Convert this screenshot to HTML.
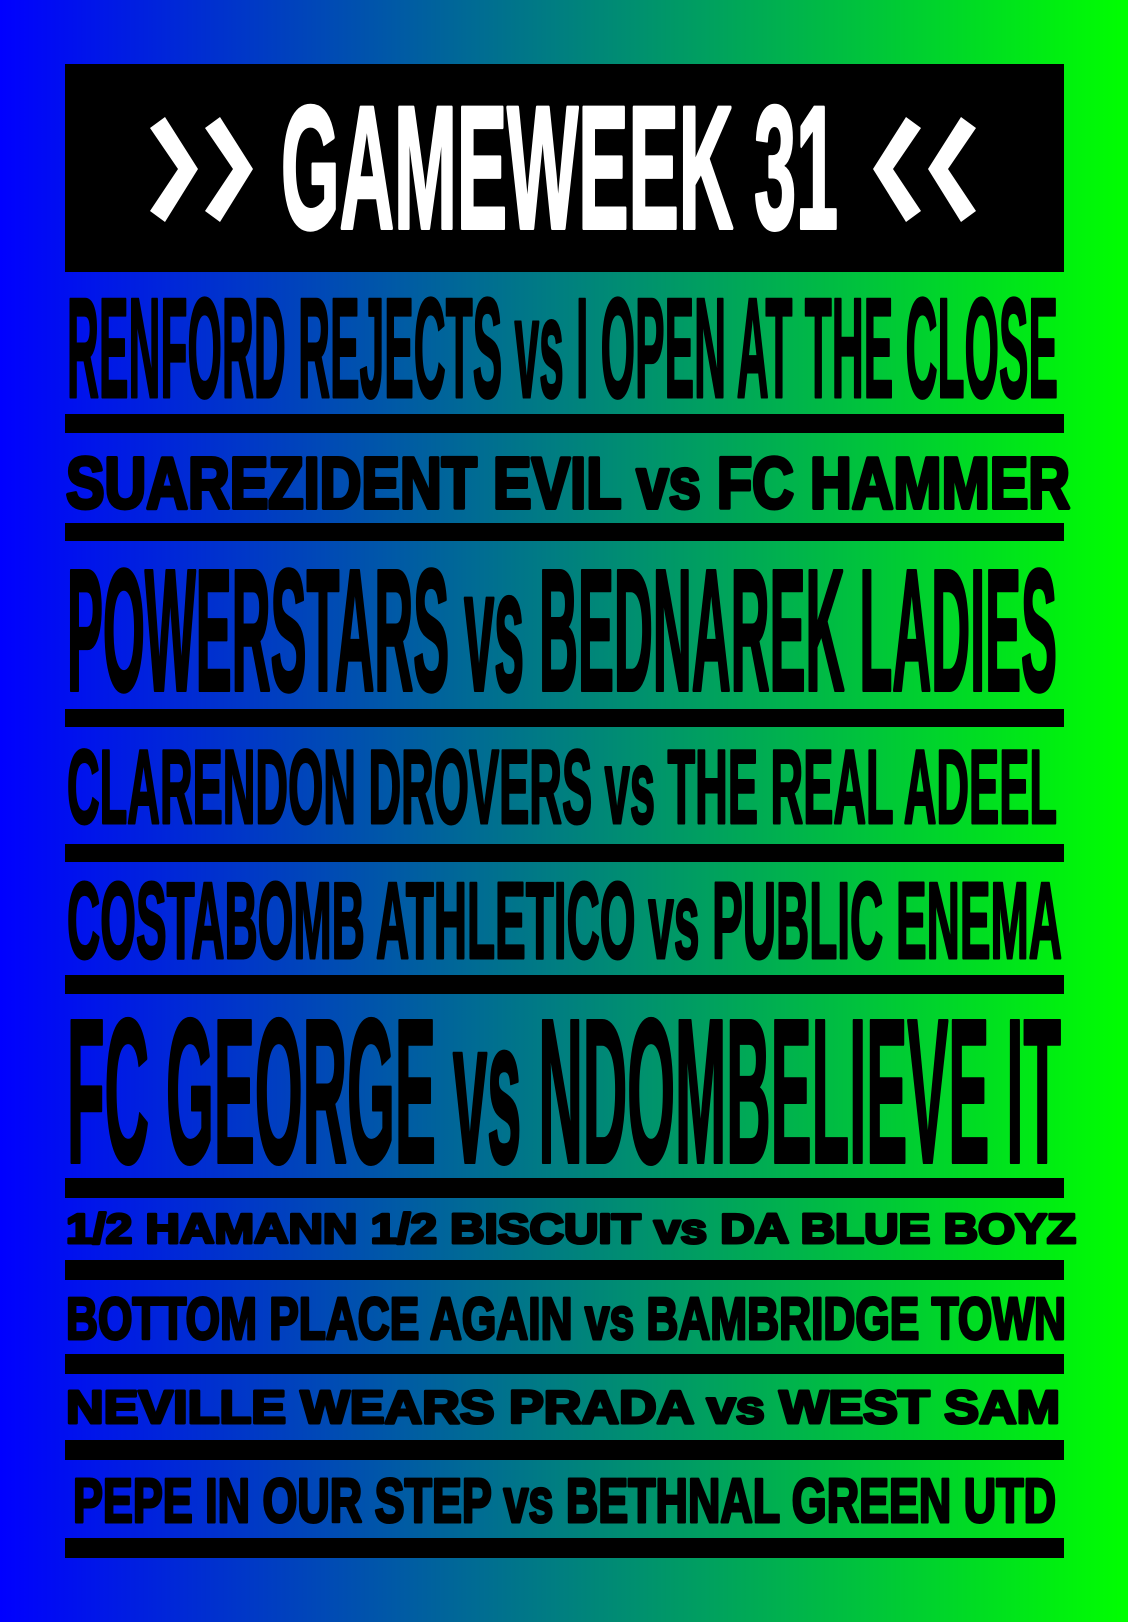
<!DOCTYPE html>
<html><head><meta charset="utf-8"><style>
html,body{margin:0;padding:0;width:1128px;height:1622px;overflow:hidden}
body{background:linear-gradient(to right,#0000ff,#00ff00)}
svg{display:block}
text{font-family:"Liberation Sans Narrow","Liberation Sans",sans-serif;font-weight:bold;stroke-linejoin:round}
.w{font-family:"Liberation Sans",sans-serif}
</style></head><body>
<svg width="1128" height="1622" viewBox="0 0 1128 1622" xmlns="http://www.w3.org/2000/svg">
<rect x="65" y="64" width="999" height="208" fill="#000"/>
<g fill="#fff">
<polygon points="150,128 165,117 198,169 165,222 150,211 178,169"/>
<polygon points="205,128 220,117 253,169 220,222 205,211 233,169"/>
<polygon points="976,128 961,117 928,169 961,222 976,211 948,169"/>
<polygon points="921,128 906,117 873,169 906,222 921,211 893,169"/>
</g>
<text x="281" y="228" font-size="175" fill="#fff" stroke="#fff" stroke-width="4" textLength="557" lengthAdjust="spacingAndGlyphs">GAMEWEEK 31</text>
<g fill="#000" stroke="#000">
<text x="67" y="397" font-size="142" stroke-width="3" textLength="991" lengthAdjust="spacingAndGlyphs">RENFORD REJECTS vs I OPEN AT THE CLOSE</text>
<rect x="65" y="414" width="999" height="19" stroke="none"/>
<text class="w" x="66" y="508" font-size="72" stroke-width="4" textLength="1004" lengthAdjust="spacingAndGlyphs">SUAREZIDENT EVIL vs FC HAMMER</text>
<rect x="65" y="523" width="999" height="18" stroke="none"/>
<text x="67" y="690" font-size="173" stroke-width="4" textLength="990" lengthAdjust="spacingAndGlyphs">POWERSTARS vs BEDNAREK LADIES</text>
<rect x="65" y="709" width="999" height="18" stroke="none"/>
<text x="67" y="823" font-size="105" stroke-width="3" textLength="990" lengthAdjust="spacingAndGlyphs">CLARENDON DROVERS vs THE REAL ADEEL</text>
<rect x="65" y="844" width="999" height="18" stroke="none"/>
<text x="67" y="958" font-size="109" stroke-width="3" textLength="995" lengthAdjust="spacingAndGlyphs">COSTABOMB ATHLETICO vs PUBLIC ENEMA</text>
<rect x="65" y="975" width="999" height="19" stroke="none"/>
<text x="67" y="1162" font-size="205" stroke-width="4" textLength="994" lengthAdjust="spacingAndGlyphs">FC GEORGE vs NDOMBELIEVE IT</text>
<rect x="65" y="1178" width="999" height="20" stroke="none"/>
<text class="w" x="66" y="1243" font-size="42" stroke-width="3" textLength="1010" lengthAdjust="spacingAndGlyphs">1/2 HAMANN 1/2 BISCUIT vs DA BLUE BOYZ</text>
<rect x="65" y="1260" width="999" height="20" stroke="none"/>
<text x="66" y="1339" font-size="59" stroke-width="3" textLength="1000" lengthAdjust="spacingAndGlyphs">BOTTOM PLACE AGAIN vs BAMBRIDGE TOWN</text>
<rect x="65" y="1354" width="999" height="20" stroke="none"/>
<text class="w" x="66" y="1423" font-size="46" stroke-width="3" textLength="994" lengthAdjust="spacingAndGlyphs">NEVILLE WEARS PRADA vs WEST SAM</text>
<rect x="65" y="1440" width="999" height="20" stroke="none"/>
<text x="73" y="1522" font-size="62" stroke-width="3" textLength="983" lengthAdjust="spacingAndGlyphs">PEPE IN OUR STEP vs BETHNAL GREEN UTD</text>
<rect x="65" y="1538" width="999" height="20" stroke="none"/>
</g>
</svg>
</body></html>
